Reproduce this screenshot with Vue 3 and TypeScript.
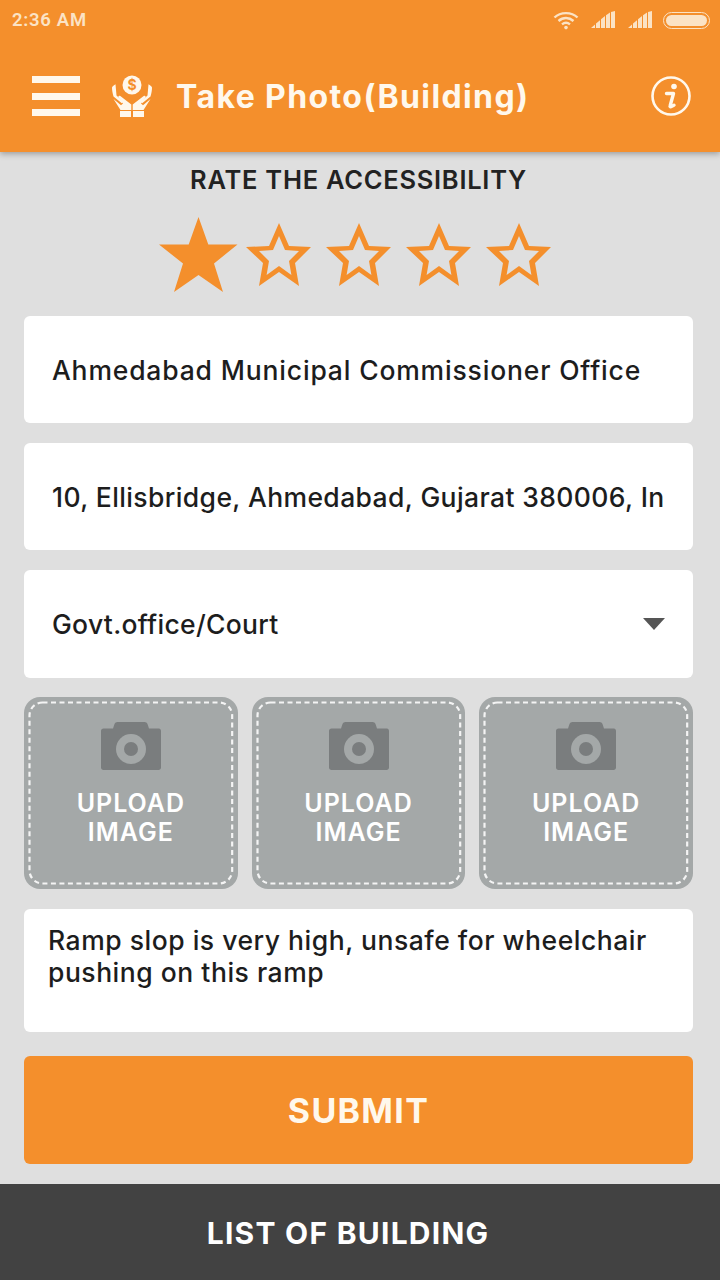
<script setup lang="ts">
const uploads: number[] = [1, 2, 3]
const outline: number[] = [1, 2, 3, 4]
</script>

<template>
  <div class="page">
    <header class="appbar">
      <div class="status">
        <span class="time">2:36 AM</span>
        <div class="status-icons">
          <svg class="wifi" width="26" height="20" viewBox="0 0 26 20" fill="none" stroke="#fbe3c5" stroke-width="2.4">
            <path d="M1.500 7.500C7.500 1.700 18.500 1.700 24.500 7.500" />
            <path d="M5.500 11C10 7 16 7 20.500 11" />
            <path d="M9 14.400C11.400 12.400 14.600 12.400 17 14.400" />
            <circle cx="13" cy="17.600" r="1.800" fill="#fbe3c5" stroke="none" />
          </svg>
          <svg class="signal" width="25" height="18" viewBox="0 0 25 18" fill="#fbe3c5">
            <path d="M0 17l4-3.500V17zM5 12.600l4-3.400V17H5zM10 8.300l4-3.300V17h-4zM15 4.200l4-2.700V17h-4zM20 1l4-1v17h-4z" />
          </svg>
          <svg class="signal" width="25" height="18" viewBox="0 0 25 18" fill="#fbe3c5">
            <path d="M0 17l4-3.500V17zM5 12.600l4-3.400V17H5zM10 8.300l4-3.300V17h-4zM15 4.200l4-2.700V17h-4zM20 1l4-1v17h-4z" />
          </svg>
          <div class="battery"><div class="battery-fill"></div></div>
        </div>
      </div>
      <div class="toolbar">
        <div class="menu"><i></i><i></i><i></i></div>
        <svg class="hands" width="40" height="46" viewBox="0 0 40 46">
          <circle cx="20" cy="12" r="9.500" fill="#fff8ec" />
          <text x="20" y="16.800" text-anchor="middle" class="dollar">$</text>
          <path fill="#fff8ec" d="M0 14.500C.5 13 2 12 3.500 11.200L4.500 22.500l6.700 6.200-1.400 1.600L1.500 23.500C.5 20 0 17 0 14.500z" />
          <path fill="#fff8ec" d="M40 14.500C39.500 13 38 12 36.500 11.200L35.500 22.500l-6.700 6.200 1.400 1.600 8.300-6.800c1-3.500 1.500-6.500 1.500-9z" />
          <path fill="#fff8ec" d="M1.500 26l7.500 6.300 2-1.800-4.500-6c-.6-1.200.6-2.200 1.800-1.500l11 8.500V37H8.500z" />
          <path fill="#fff8ec" d="M38.500 26L31 32.300 29 30.500l4.500-6c.6-1.200-.6-2.200-1.800-1.500l-11 8.500V37h10.800z" />
          <path fill="#fff8ec" d="M8 38h11v6H8zM21 38h11v6H21z" />
        </svg>
        <h1 class="title">Take Photo(Building)</h1>
        <svg class="info" width="40" height="40" viewBox="0 0 40 40" fill="none">
          <circle cx="20" cy="20" r="18.500" stroke="#fff8ec" stroke-width="2.600" />
          <circle cx="23" cy="10.500" r="2.800" fill="#fff8ec" />
          <path d="M15.500 17.500h7l-3.400 12.500c-.3 1 .7 1.300 3.900-.8" stroke="#fff8ec" stroke-width="3.400" stroke-linecap="round" stroke-linejoin="round" />
        </svg>
      </div>
    </header>

    <main class="content">
      <h2 class="rate">RATE THE ACCESSIBILITY</h2>
      <div class="stars">
        <svg width="80" height="76" viewBox="0 0 80 76" class="star-filled">
          <path fill="#f48f2c" d="M39.500 0l9.800 27.500H78.500L55 46.500 64 75 39.500 58 15 75l9-28.500L0 27.500h29.700z" />
        </svg>
        <svg v-for="n in outline" :key="n" width="66" height="64" viewBox="0 0 66 64" class="star-outline">
          <path fill="#f48f2c" fill-rule="evenodd" d="M33 0l10 23 22 1-16 16 4 23-20-14-20 14 4-23L0 24l23-1zM33 13l-6 14-14 1 10 10-2.400 14L33 43l12.400 9L43 38l10-10-14-1z" />
        </svg>
      </div>

      <div class="field name">Ahmedabad Municipal Commissioner Office</div>
      <div class="field address">10, Ellisbridge, Ahmedabad, Gujarat 380006, In</div>
      <div class="field select">
        <span>Govt.office/Court</span>
        <span class="caret"></span>
      </div>

      <div class="uploads">
        <div v-for="u in uploads" :key="u" class="upload">
          <svg class="dash-line" width="100%" height="100%">
            <rect class="dash-rect" />
          </svg>
          <svg width="60" height="48" viewBox="0 0 60 48">
            <path fill="#7a7d7e" d="M0 9c0-1.500 1-2.500 2.500-2.500H12l1.500-4.500c.5-1.200 1.500-2 3-2h27c1.500 0 2.500.8 3 2l1.500 4.500h10C59 6.500 60 7.500 60 9v36.500c0 1.500-1 2.500-2.500 2.500h-55C1 48 0 47 0 45.500z" />
            <circle cx="30" cy="27" r="15" fill="#a4a8a8" />
            <circle cx="30" cy="27" r="7" fill="#7a7d7e" />
          </svg>
          <span class="upload-text">UPLOAD<br />IMAGE</span>
        </div>
      </div>

      <div class="remarks">Ramp slop is very high, unsafe for wheelchair pushing on this ramp</div>

      <button class="submit" type="button">SUBMIT</button>
    </main>

    <footer class="footer"><span>LIST OF BUILDING</span></footer>
  </div>
</template>

<style>
html, body { margin: 0; padding: 0; }
</style>

<style scoped>
.page {
  width: 720px;
  height: 1280px;
  display: flex;
  flex-direction: column;
  background: #dfdfdf;
  font-family: Inter, "Noto Sans", sans-serif;
  overflow: hidden;
}
.appbar {
  height: 152px;
  flex: none;
  background: #f48f2c;
  box-shadow: 0 2px 6px rgba(0, 0, 0, 0.3);
  position: relative;
  z-index: 1;
}
.status {
  height: 40px;
  display: flex;
  justify-content: space-between;
  align-items: center;
  padding: 0 10px 0 12px;
}
.time {
  color: #fbe3c5;
  font-size: 18.500px;
  font-weight: 600;
  letter-spacing: 0.7px;
  font-family: Roboto, sans-serif;
}
.status-icons { display: flex; align-items: center; }
.wifi { margin-right: 12px; }
.signal { margin-right: 12px; }
.signal + .signal { margin-right: 10px; }
.battery {
  width: 47px;
  height: 17px;
  border: 1.500px solid #fbe3c5;
  border-radius: 9px;
  padding: 2px;
  box-sizing: border-box;
}
.battery-fill { width: 100%; height: 100%; background: #fbe3c5; border-radius: 6px; }
.toolbar {
  height: 114px;
  margin-top: -1px;
  display: flex;
  align-items: center;
  padding: 0 29px 0 32px;
}
.menu { width: 48px; display: flex; flex-direction: column; gap: 9.500px; margin-right: 32px; }
.menu i { display: block; height: 7px; background: #fff8ec; }
.hands { margin-right: 24px; }
.title {
  flex: 1;
  margin: 0;
  color: #fff8ec;
  font-size: 32px;
  font-weight: 700;
  letter-spacing: 1.400px;
}
.dollar { font: 700 14px Inter, sans-serif; fill: #f48f2c; }
.content {
  flex: 1;
  display: flex;
  flex-direction: column;
  padding: 0 27px 20px 24px;
}
.rate {
  margin: 14px 0 0;
  height: 28px;
  line-height: 28px;
  text-align: center;
  font-size: 25.500px;
  font-weight: 600;
  letter-spacing: 0.73px;
  color: #222;
}
.stars {
  display: flex;
  align-items: flex-start;
  height: 76px;
  margin: 23px 0;
  padding-left: 135px;
}
.star-filled { margin-right: 7px; }
.star-outline { margin: 6px 14px 0 0; }
.field {
  height: 107px;
  background: #fff;
  border-radius: 6px;
  display: flex;
  align-items: center;
  padding: 0 28px;
  font-size: 26.500px;
  font-weight: 500;
  color: #1d1d1d;
  white-space: nowrap;
  overflow: hidden;
  margin-bottom: 20px;
}
.name { letter-spacing: 0.83px; }
.address { letter-spacing: 0.39px; }
.select { justify-content: space-between; height: 108px; letter-spacing: 0.3px; margin-bottom: 19px; }
.caret {
  width: 0;
  height: 0;
  border-left: 11px solid transparent;
  border-right: 11px solid transparent;
  border-top: 12px solid #555;
}
.uploads { display: flex; gap: 14px; margin-bottom: 20px; }
.upload {
  flex: 1;
  height: 192px;
  background: #a4a8a8;
  border-radius: 16px;
  box-sizing: border-box;
  position: relative;
  display: flex;
  flex-direction: column;
  align-items: center;
  padding-top: 25px;
  gap: 19px;
}
.dash-line { position: absolute; left: 0; top: 0; }
.dash-rect {
  x: 5.500px;
  y: 5.500px;
  width: calc(100% - 11px);
  height: calc(100% - 11px);
  rx: 13px;
  fill: none;
  stroke: #f4f4f4;
  stroke-width: 2.200px;
  stroke-dasharray: 5px 3.500px;
}
.upload-text {
  color: #fff;
  font-weight: 600;
  font-size: 25px;
  letter-spacing: 1px;
  line-height: 29px;
  text-align: center;
}
.remarks {
  height: 123px;
  box-sizing: border-box;
  background: #fff;
  border-radius: 6px;
  padding: 15px 24px;
  font-size: 26.500px;
  font-weight: 500;
  letter-spacing: 0.52px;
  line-height: 32px;
  color: #1d1d1d;
  margin-bottom: 24px;
}
.submit {
  height: 108px;
  border: 0;
  border-radius: 6px;
  background: #f48f2c;
  color: #fff8ec;
  font-family: inherit;
  font-size: 34px;
  font-weight: 700;
  letter-spacing: 1.300px;
}
.footer {
  height: 96px;
  flex: none;
  background: #424242;
  color: #fff;
  display: flex;
  align-items: center;
  justify-content: center;
  padding: 2px 24px 0 0;
  box-sizing: border-box;
  font-size: 30px;
  font-weight: 700;
  letter-spacing: 1.250px;
}
</style>
